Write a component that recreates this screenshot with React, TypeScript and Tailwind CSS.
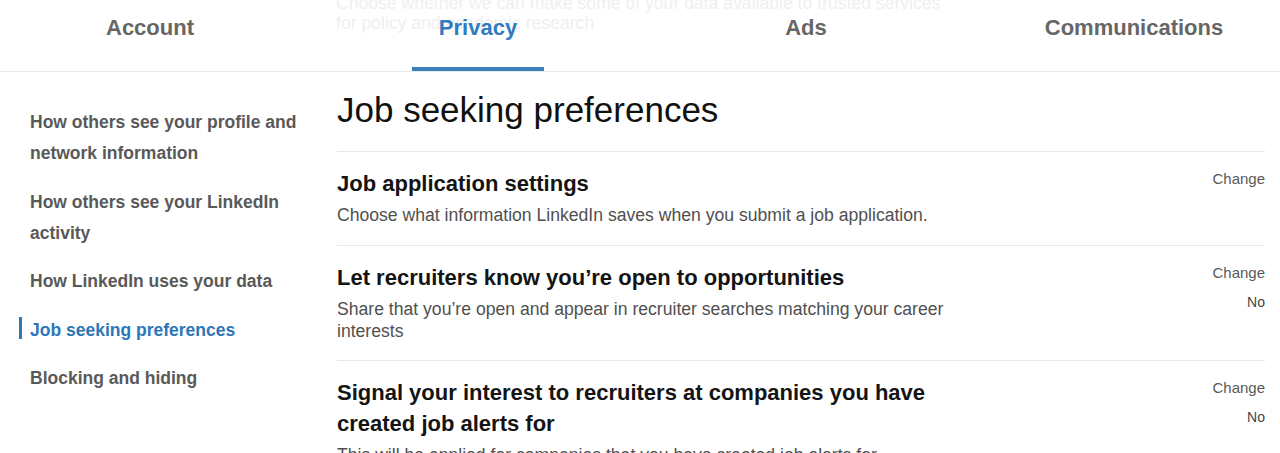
import React from "react";

const tabs = ["Account", "Privacy", "Ads", "Communications"];

const nav = [
  "How others see your profile and network information",
  "How others see your LinkedIn activity",
  "How LinkedIn uses your data",
  "Job seeking preferences",
  "Blocking and hiding",
];

const rows = [
  {
    title: "Job application settings",
    desc: "Choose what information LinkedIn saves when you submit a job application.",
    value: "",
  },
  {
    title: "Let recruiters know you\u2019re open to opportunities",
    desc: "Share that you\u2019re open and appear in recruiter searches matching your career interests",
    value: "No",
  },
  {
    title: "Signal your interest to recruiters at companies you have created job alerts for",
    desc: "This will be applied for companies that you have created job alerts for.",
    value: "No",
  },
];

export default function App() {
  return (
    <div className="relative w-[1280px] h-[453px] overflow-hidden bg-white font-['Liberation_Sans',Arial,sans-serif]">
      <header className="relative h-[72px] border-b border-[#e6e9ec]">
        <div className="absolute left-[336px] top-[-7px] w-[615px] text-[17.6px] leading-[20px] text-[#efefef]">
          Choose whether we can make some of your data available to trusted services for policy and academic research
        </div>
        <nav className="relative flex h-full ml-[-14px]">
          {tabs.map((t) => {
            const active = t === "Privacy";
            return (
              <div key={t} className="w-[328px] shrink-0 flex justify-center h-full">
                <div
                  className={
                    "h-full px-[27px] pt-[14px] text-[22px] leading-[28px] font-bold " +
                    (active
                      ? "text-[#2f7bbd] border-b-4 border-[#3a80ba]"
                      : "text-[#666666]")
                  }
                >
                  {t}
                </div>
              </div>
            );
          })}
        </nav>
      </header>

      <div className="flex">
        <aside className="w-[312px] shrink-0 pt-[27px] flex flex-col gap-[1.5px]">
          {nav.map((n) => {
            const active = n === "Job seeking preferences";
            return (
              <div
                key={n}
                className={
                  "relative pl-[30px] py-[8px] text-[17.5px] leading-[31px] font-bold " +
                  (active ? "text-[#2c77b8]" : "text-[#595959]")
                }
              >
                {active && (
                  <span className="absolute left-[19px] top-[10px] w-[3px] h-[22px] bg-[#2c77b8]" />
                )}
                {n}
              </div>
            );
          })}
        </aside>

        <main className="flex-1 pl-[25px] pr-[15px]">
          <h1 className="mt-[17px] pb-[20px] text-[35px] leading-[42px] text-[#111111]">
            Job seeking preferences
          </h1>
          {rows.map((r) => (
            <div
              key={r.title}
              className="flex justify-between border-t border-[#e6e9ec] pt-[16px] pb-[18.5px]"
            >
              <div className="w-[640px]">
                <div className="text-[22px] leading-[31px] font-bold text-[#141414]">
                  {r.title}
                </div>
                <div className="mt-[5px] text-[17.6px] leading-[22px] text-[#505050]">
                  {r.desc}
                </div>
              </div>
              <div className="flex flex-col items-end">
                <span className="text-[15px] leading-[22px] text-[#595959]">Change</span>
                {r.value && (
                  <span className="mt-[7px] text-[14px] leading-[22px] text-[#444444]">
                    {r.value}
                  </span>
                )}
              </div>
            </div>
          ))}
        </main>
      </div>
    </div>
  );
}
